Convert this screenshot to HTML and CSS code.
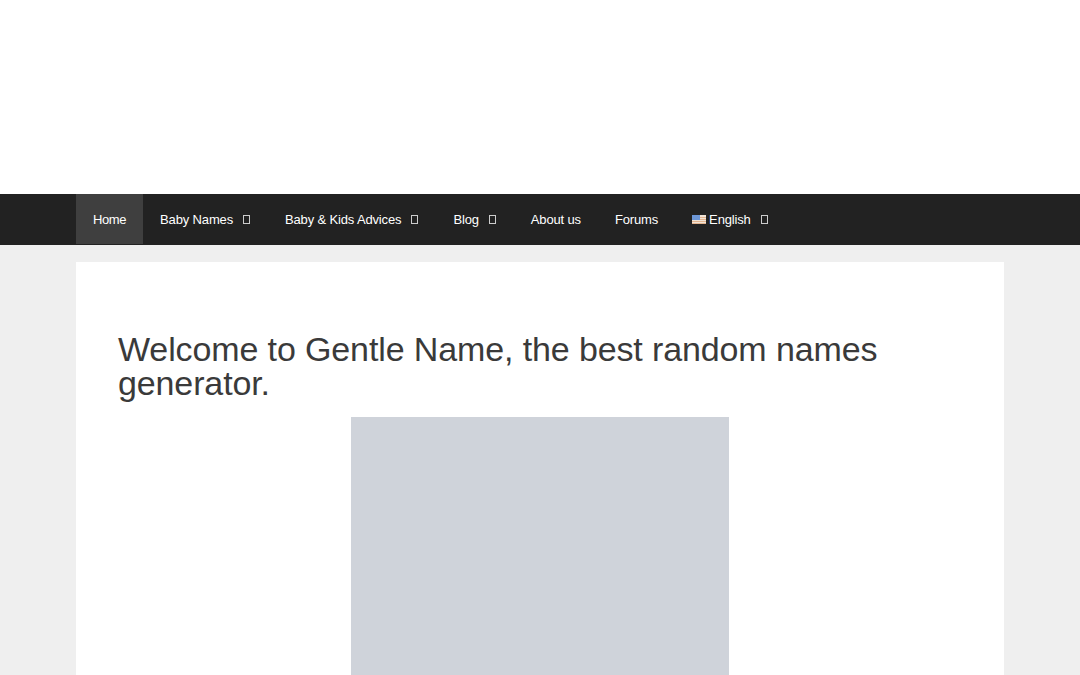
FILE: index.html
```html
<!DOCTYPE html>
<html lang="en">

<head>
    <meta charset="UTF-8">
    <meta name="viewport" content="width=device-width, initial-scale=1.0">
    <title>Gentle Name</title>
    <link rel="stylesheet" href="styles.css">
</head>

<body>

    <header class="site-header"></header>

    <!-- Main menu -->
    <nav class="main-nav">
        <ul class="nav-list">
            <li><a class="nav-link active" href="#">Home</a></li>
            <li><a class="nav-link" href="#">Baby Names<span class="caret"></span></a></li>
            <li><a class="nav-link" href="#">Baby &amp; Kids Advices<span class="caret"></span></a></li>
            <li><a class="nav-link" href="#">Blog<span class="caret"></span></a></li>
            <li><a class="nav-link" href="#">About us</a></li>
            <li><a class="nav-link" href="#">Forums</a></li>
            <li>
                <a class="nav-link" href="#">
                    <svg class="flag" viewBox="0 0 14 9" aria-hidden="true">
                        <rect width="14" height="9" fill="#f1e4d6"/>
                        <rect y="2" width="14" height="1" fill="#e3b48f"/>
                        <rect y="4" width="14" height="1" fill="#e3b48f"/>
                        <rect y="6" width="14" height="1" fill="#e3b48f"/>
                        <rect y="8" width="14" height="1" fill="#e3b48f"/>
                        <rect width="8" height="5" fill="#6d97d6"/>
                    </svg>English<span class="caret"></span>
                </a>
            </li>
        </ul>
    </nav>

    <div class="page">
        <main class="content">
            <h1>Welcome to Gentle Name, the best random names generator.</h1>
            <div class="ad-slot"></div>
        </main>
    </div>

</body>

</html>
```

FILE: styles.css
```css
/* General Styles */
body {
    font-family: "Liberation Sans", Arial, sans-serif;
    margin: 0;
    padding: 0;
    background-color: #efefef;
    color: #3a3a3a;
}

.site-header {
    height: 194px;
    background-color: #fff;
}

/* Main menu */
.main-nav {
    height: 51px;
    padding: 0 76px;
    background-color: #222;
}

.nav-list {
    display: flex;
    margin: 0;
    padding: 0;
    list-style: none;
}

.nav-link {
    display: flex;
    align-items: center;
    height: 50px;
    padding: 0 17px;
    font-size: 13px;
    letter-spacing: -0.15px;
    color: #fff;
    text-decoration: none;
}

.nav-link.active {
    letter-spacing: -0.4px;
    background-color: #3f3f3f;
}

.caret {
    width: 5px;
    height: 7px;
    margin: 0 1px 0 10px;
    border: 1px solid #ccc;
}

.flag {
    width: 14px;
    height: 9px;
    margin-right: 3px;
}

/* Content */
.page {
    padding: 17px 76px 0;
}

.content {
    padding: 70px 42px 0;
    background-color: #fff;
}

h1 {
    margin: 0 0 17px;
    font-size: 34px;
    font-weight: 400;
    line-height: 34px;
    letter-spacing: -0.12px;
}

.ad-slot {
    width: 378px;
    height: 258px;
    margin: 0 auto;
    background-color: #cfd3da;
}
```
